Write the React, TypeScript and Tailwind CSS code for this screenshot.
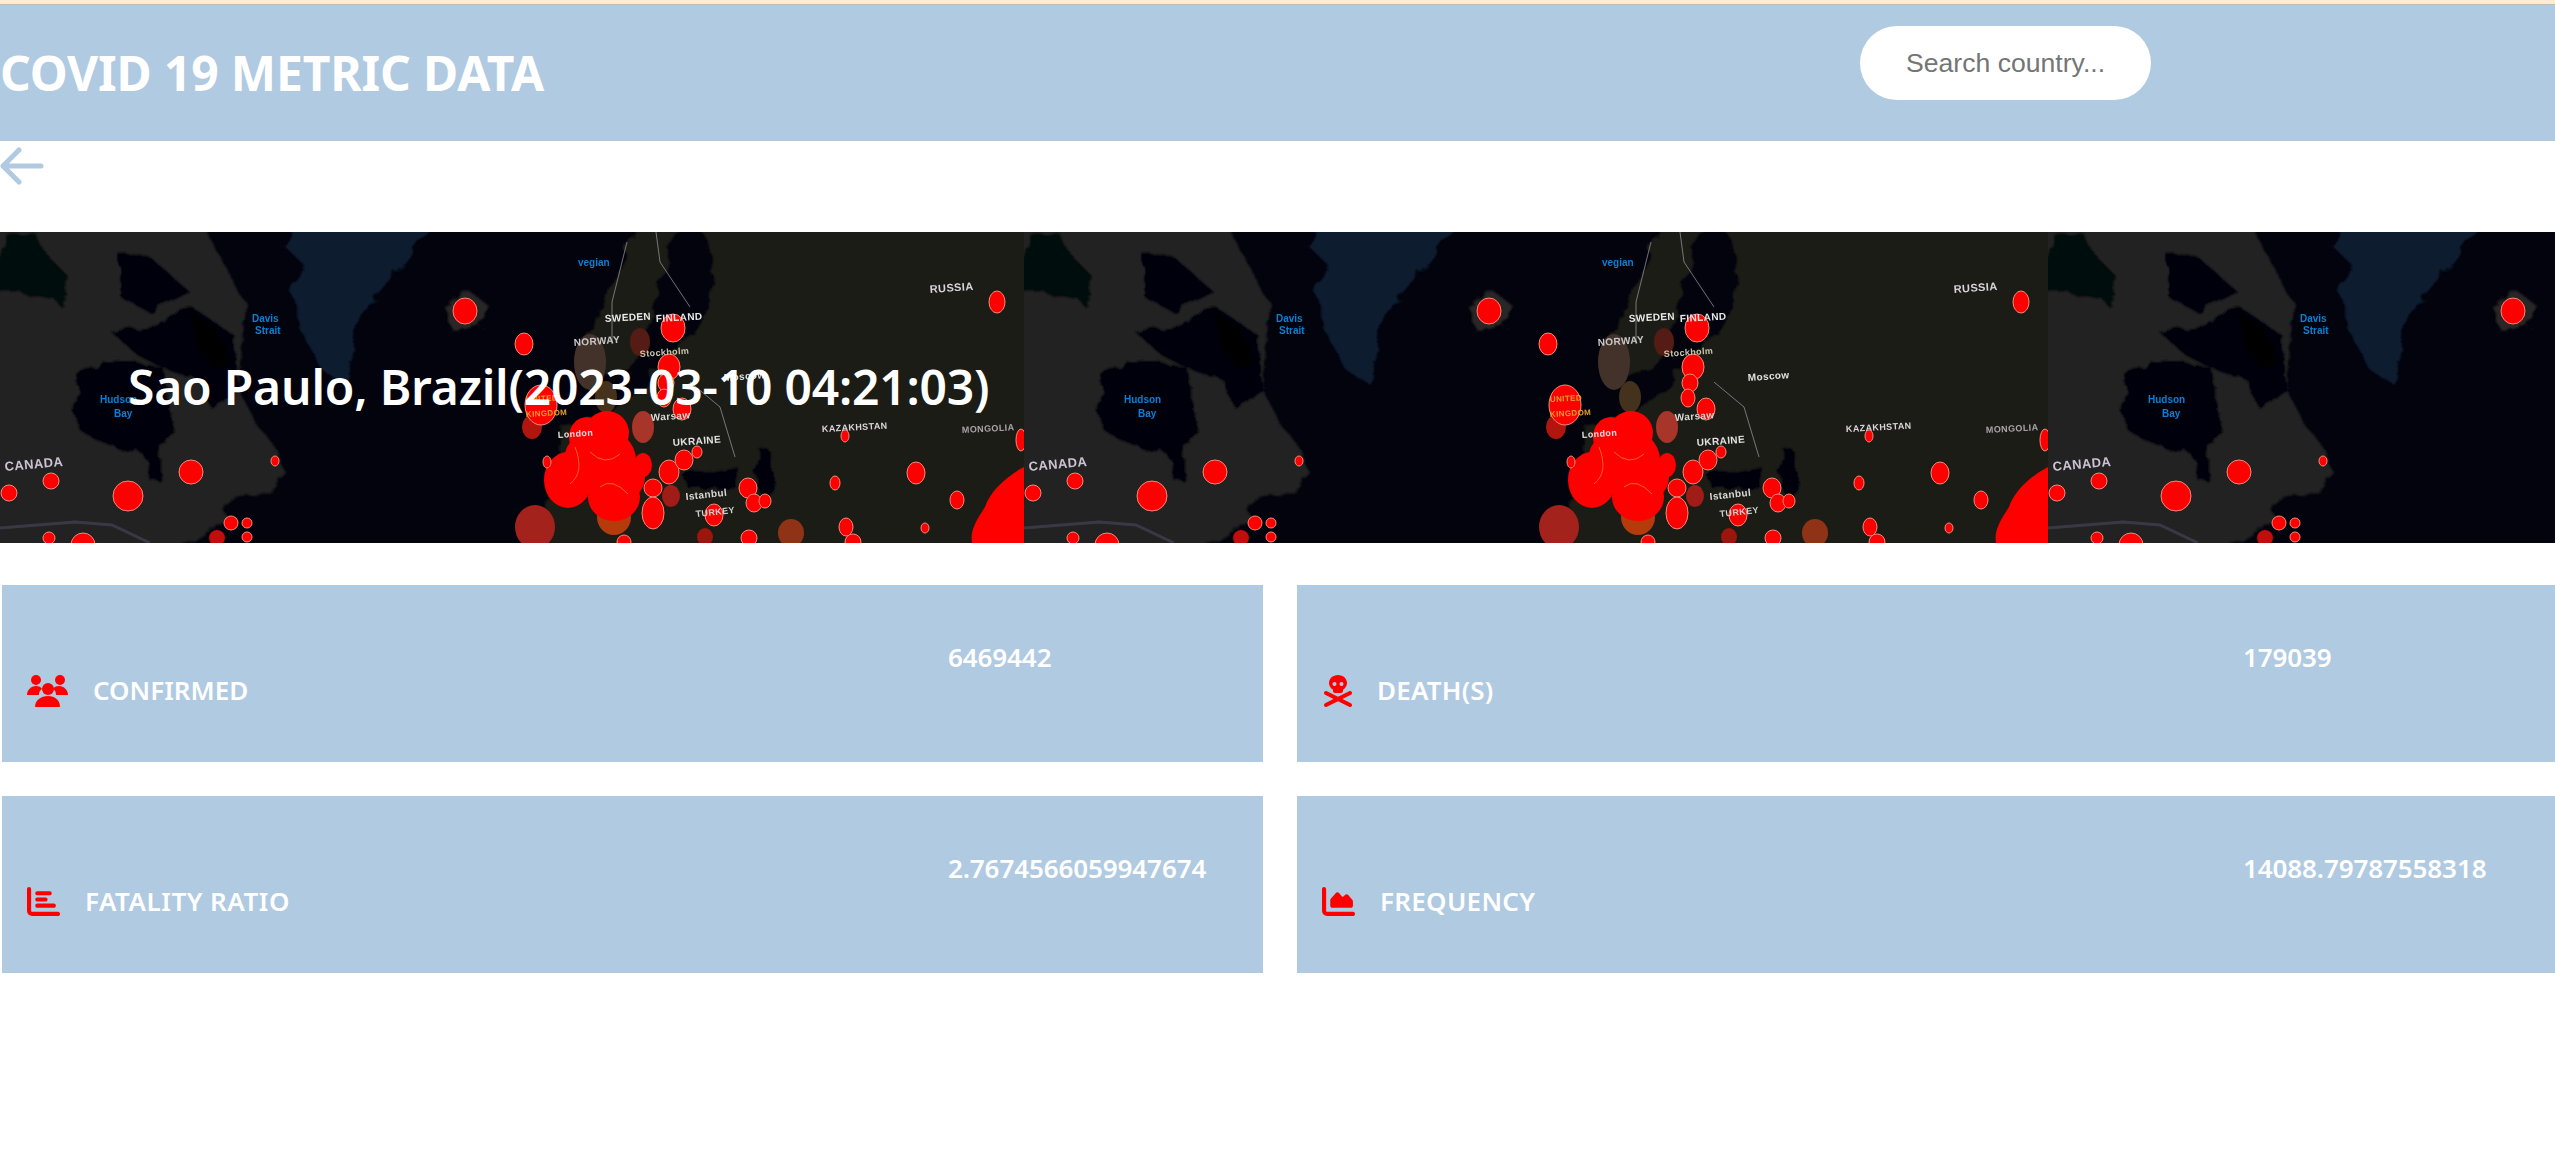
import { FaChartArea, FaChartBar, FaSkullCrossbones } from "react-icons/fa6";

const dots = [
    [465, 79, 12, 13], [275, 229, 4, 5], [191, 240, 12, 12], [128, 264, 15, 15], [51, 249, 8, 8],
    [9, 261, 8, 8], [231, 291, 7, 7], [247, 291, 5, 5], [247, 305, 5, 5], [49, 306, 6, 6],
    [83, 313, 12, 12], [524, 112, 9, 11], [673, 96, 12, 14], [669, 135, 11, 13], [666, 151, 8, 9],
    [664, 166, 7, 9], [682, 177, 9, 11], [541, 173, 16, 20], [547, 230, 4, 6], [653, 256, 9, 9],
    [669, 240, 10, 12], [684, 228, 9, 10], [697, 220, 5, 6], [748, 256, 9, 10], [754, 271, 8, 9],
    [765, 269, 6, 7], [714, 283, 9, 11], [916, 241, 9, 11], [835, 251, 5, 7], [845, 204, 4, 6],
    [957, 268, 7, 9], [846, 295, 7, 9], [925, 296, 4, 5], [997, 70, 8, 11], [1021, 208, 5, 11],
    [749, 306, 8, 8], [624, 310, 7, 7], [853, 310, 8, 8], [653, 281, 11, 16],
];

const blob = [
    [607, 201, 22, 22], [587, 205, 18, 20], [600, 228, 36, 32], [568, 248, 24, 28], [614, 265, 26, 24],
    [643, 233, 9, 12], [625, 245, 20, 22],
];

const dimDots = [
    [590, 130, 16, 28, "#43302b"], [640, 110, 10, 14, "#551a14"], [606, 165, 11, 16, "#44301f"],
    [643, 195, 11, 16, "#a8342a"], [532, 195, 10, 12, "#b01510"], [671, 264, 9, 11, "#a01a18"],
    [614, 285, 17, 18, "#b53a10"], [535, 295, 20, 22, "#a3211c"], [705, 305, 8, 9, "#9c1411"],
    [791, 301, 13, 14, "#8f3318"], [217, 306, 8, 8, "#c00808"],
];

const labels: [string, number, number, number, string, number][] = [
    ["CANADA", 5, 239, 13, "#c9c2d2", -5],
    ["RUSSIA", 930, 61, 11, "#d8d4dc", -4],
    ["SWEDEN", 605, 90, 10, "#e8e8e8", -3],
    ["FINLAND", 656, 90, 10, "#e8e8e8", -3],
    ["NORWAY", 574, 114, 10, "#c8c8c8", -4],
    ["Stockholm", 640, 125, 9, "#c9c4a8", -4],
    ["Moscow", 724, 149, 10, "#e0e0e0", -4],
    ["Warsaw", 651, 189, 10, "#d8d8d8", -4],
    ["London", 558, 206, 9, "#e0e0e0", -4],
    ["UKRAINE", 673, 214, 10, "#e0e0e0", -4],
    ["KAZAKHSTAN", 822, 200, 9, "#d8d4dc", -3],
    ["MONGOLIA", 962, 201, 9, "#a8a4ac", -3],
    ["Istanbul", 686, 268, 10, "#d8d8d8", -6],
    ["TURKEY", 696, 285, 9, "#d0d0d0", -6],
    ["UNITED", 526, 170, 8, "#e8a030", -3],
    ["KINGDOM", 526, 185, 8, "#e8a030", -3],
];

const blueLabels: [string, number, number][] = [
    ["Davis", 252, 90], ["Strait", 255, 102], ["Hudson", 100, 171], ["Bay", 114, 185], ["vegian", 578, 34],
];

const MapTile = () => {
    return (
        <svg className="shrink-0 block w-[1024px] h-[311px]" viewBox="0 0 1024 311">
            <defs>
                <filter id="coast" x="-5%" y="-5%" width="110%" height="110%">
                    <feTurbulence type="fractalNoise" baseFrequency="0.045" numOctaves="4" seed="7" />
                    <feDisplacementMap in="SourceGraphic" scale="14" />
                    <feGaussianBlur stdDeviation="0.8" />
                </filter>
                <filter id="soft">
                    <feGaussianBlur stdDeviation="0.45" />
                </filter>
            </defs>
            <rect width="1024" height="311" fill="#02030d" />
            <g filter="url(#coast)">
                {/* north america */}
                <path d="M-20 -20H195L220 25L245 70L239 158L259 195L279 221L285 241L272 265L245 261L222 278L232 290L145 330H-20Z" fill="#232220" />
                <path d="M72 178L79 145L102 128L135 128L165 138L174 201L159 221L162 251L149 248L142 221L109 215L82 201Z" fill="#02030d" />
                <path d="M112 101L159 95L192 75L232 101L239 158L209 175L199 148L165 138L135 121Z" fill="#02030d" />
                <path d="M5 6L35 1L49 25L69 45L64 78L55 68L25 61L-10 58Z" fill="#060710" />
                <path d="M120 22L150 25L190 60L150 80L120 65Z" fill="#050610" />
                <path d="M190 80L215 95L232 130L215 140L195 110Z" fill="#000000" />
                <path d="M-20 297L75 290L110 293L150 330H-20Z" fill="#232220" />
                {/* greenland and iceland */}
                <path d="M302 -20H445L399 38L369 75L355 101L345 151L322 138L302 101L292 61L302 31L285 15Z" fill="#0c1e2f" />
                <path d="M442 72L470 60L490 75L478 95L452 98Z" fill="#2a2825" />
                {/* eurasia */}
                <path d="M647 -20L620 31L604 75L581 111L600 145L627 135L646 101L660 55L679 -20Z" fill="#1d1c19" />
                <path d="M693 -20H1044V330H760L720 300L690 260L700 225L660 200L645 170L650 140L680 120L700 90L710 60L715 30Z" fill="#1b1a17" />
                <path d="M560 195L600 180L650 160L690 150L720 230L740 330H530L550 260Z" fill="#1d1c19" />
                <path d="M680 240L738 235L735 255L690 258Z" fill="#02030d" />
                <ellipse cx="765" cy="240" rx="9" ry="24" fill="#02030d" />
            </g>
            <path d="M0 296L75 290L112 293L150 311" fill="none" stroke="#3a3945" strokeWidth="3" filter="url(#soft)" />
            <g fill="none" stroke="#8d8d90" strokeWidth="0.8" filter="url(#soft)">
                <path d="M627 10L612 70L612 112M656 0L660 30L680 60L690 75M690 150L720 175L735 225" />
            </g>
            <g filter="url(#soft)">
                <path d="M1024 235C1005 245 990 260 985 275C975 290 970 300 972 311H1024Z" fill="#ff0000" />
                {dimDots.map(([cx, cy, rx, ry, fill]) => <ellipse key={`${cx}-${cy}`} cx={cx} cy={cy} rx={rx} ry={ry} fill={fill as string} />)}
                {blob.map(([cx, cy, rx, ry]) => <ellipse key={`${cx}-${cy}`} cx={cx} cy={cy} rx={rx} ry={ry} fill="#ff0000" />)}
                <path d="M590 220Q605 235 620 222M600 255Q612 245 628 262M575 215Q585 240 570 252" fill="none" stroke="#e89020" strokeWidth="0.7" />
                {dots.map(([cx, cy, rx, ry]) => <ellipse key={`${cx}-${cy}`} cx={cx} cy={cy} rx={rx} ry={ry} fill="#ff0000" stroke="#f58a78" strokeWidth="1" />)}
                {labels.map(([text, x, y, size, fill, rotate]) => (
                    <text key={text} x={x} y={y} fontSize={size} fill={fill} fontWeight="700" letterSpacing="0.4" fontFamily="Liberation Sans, sans-serif" transform={`rotate(${rotate} ${x} ${y})`}>{text}</text>
                ))}
                {blueLabels.map(([text, x, y]) => (
                    <text key={text} x={x} y={y} fontSize="10" fill="#0a7fd0" fontWeight="700" fontFamily="Liberation Sans, sans-serif">{text}</text>
                ))}
            </g>
        </svg>
    )
}

const GroupIcon = () => {
    return (
        <svg className="shrink-0" width="41" height="32" viewBox="0 0 41 32" fill="#ff0000">
            <circle cx="9" cy="5" r="5" />
            <circle cx="33" cy="5" r="5" />
            <path d="M0 20c0-5 4-9 9-9c3 0 5 1 6 3c-2 1-3 3-3 6Z" />
            <path d="M41 20c0-5-4-9-9-9c-3 0-5 1-6 3c2 1 3 3 3 6Z" />
            <circle cx="21" cy="14" r="6" />
            <path d="M8 32c0-7 6-11 13-11s12 4 12 11Z" />
        </svg>
    )
}

const MetricCard = ({ icon, iconBox, labelClass, label, value }: { icon: React.ReactNode; iconBox: string; labelClass: string; label: string; value: string }) => {
    return (
        <div className="bg-[#b0cae2] h-[177px] flex text-white text-[26px] leading-[39px] font-semibold">
            <div className="w-[946px] pl-[25px] pt-[86px] flex items-start">
                <div className={`h-[39px] flex items-center shrink-0 ${iconBox}`}>{icon}</div>
                <span className={labelClass}>{label}</span>
            </div>
            <div className="pt-[53px] tracking-[-0.1px]">{value}</div>
        </div>
    )
}

const App = () => {
    return (
        <div className="bg-white min-h-[1152px] font-['Noto_Sans',sans-serif]">
            <div className="h-[4px] bg-[#feebd2]" />
            <header className="bg-[#b0cae2] h-[137px] border-t border-[#c0bdb5] flex">
                <div className="w-[1860px] h-full flex items-center">
                    <h1 className="text-white text-[48px] font-bold leading-none tracking-[-0.15px]">COVID 19 METRIC DATA</h1>
                </div>
                <input
                    className="mt-[21px] w-[291px] h-[74px] rounded-[37px] bg-white pl-[46px] text-[26.6px] font-['Liberation_Sans',sans-serif] outline-none placeholder:text-[#757575]"
                    placeholder="Search country..."
                />
            </header>
            <div className="h-[91px] pt-[6px]">
                <svg width="44" height="38" viewBox="0 0 44 38" fill="none" stroke="#b0cae2" strokeWidth="5" strokeLinecap="round" strokeLinejoin="round">
                    <path d="M3 19H41M19 3L3 19L19 35" />
                </svg>
            </div>
            <div className="relative h-[311px] overflow-hidden">
                <div className="flex">
                    <MapTile />
                    <MapTile />
                    <MapTile />
                </div>
                <h2 className="absolute left-[128px] top-[119px] text-white text-[48px] leading-[72px] font-semibold whitespace-nowrap tracking-[-0.2px]">Sao Paulo, Brazil(2023-03-10 04:21:03)</h2>
            </div>
            <div className="ml-[2px] mt-[42px] grid grid-cols-[1261px_1258px] gap-[34px]">
                <MetricCard icon={<GroupIcon />} iconBox="w-[66px]" labelClass="" label="CONFIRMED" value="6469442" />
                <MetricCard icon={<FaSkullCrossbones className="text-[#ff0000] text-[32px]" />} iconBox="w-[55px]" labelClass="tracking-[0.2px]" label="DEATH(S)" value="179039" />
                <MetricCard icon={<FaChartBar className="text-[#ff0000] text-[33px]" />} iconBox="w-[58px]" labelClass="tracking-[0.5px]" label="FATALITY RATIO" value="2.7674566059947674" />
                <MetricCard icon={<FaChartArea className="text-[#ff0000] text-[33px]" />} iconBox="w-[58px]" labelClass="tracking-[0.3px]" label="FREQUENCY" value="14088.79787558318" />
            </div>
        </div>
    )
}

export default App
